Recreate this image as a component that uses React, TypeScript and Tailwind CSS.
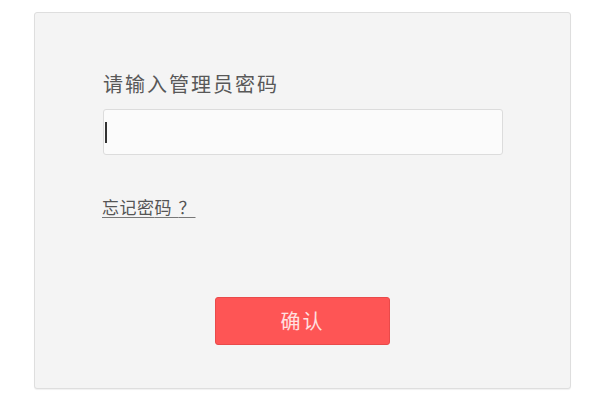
export default function App() {
  return (
    <div
      className="w-[600px] h-[402px] bg-white pt-[12px] pl-[34px]"
      style={{ fontFamily: '"Noto Sans CJK SC", "Noto Sans", sans-serif' }}
    >
      <div className="w-[537px] h-[377px] bg-[#f4f4f4] border border-[#dedede] rounded-[3px] shadow-[0_1px_1px_rgba(0,0,0,0.06)] flex flex-col">
        <div className="pl-[68px] pt-[59px]">
          <p className="text-[20px] leading-[24px] tracking-[2px] text-[#585858]">请输入管理员密码</p>
        </div>

        <div className="pl-[68px] mt-[13px]">
          <div className="w-[400px] h-[46px] bg-[#fbfbfb] border border-[#dcdcdc] rounded-[3px] flex items-center pl-[1px]">
            <div className="w-[2px] h-[21px] bg-[#333]" />
          </div>
        </div>

        <div className="pl-[67px] mt-[40px]">
          <a className="text-[17px] leading-[22px] text-[#555] underline underline-offset-[3px] decoration-[#777] tracking-[0.5px]">
            忘记密<span className="tracking-[7px]">码</span><span className="tracking-[0px]">？</span>
          </a>
        </div>

        <div className="flex justify-center mt-[78px]">
          <button className="w-[175px] h-[48px] bg-[#fe5555] border border-[#e94a4a] rounded-[3px] text-[20px] tracking-[2px] text-[#ffe0e0]">
            确认
          </button>
        </div>
      </div>
    </div>
  );
}
